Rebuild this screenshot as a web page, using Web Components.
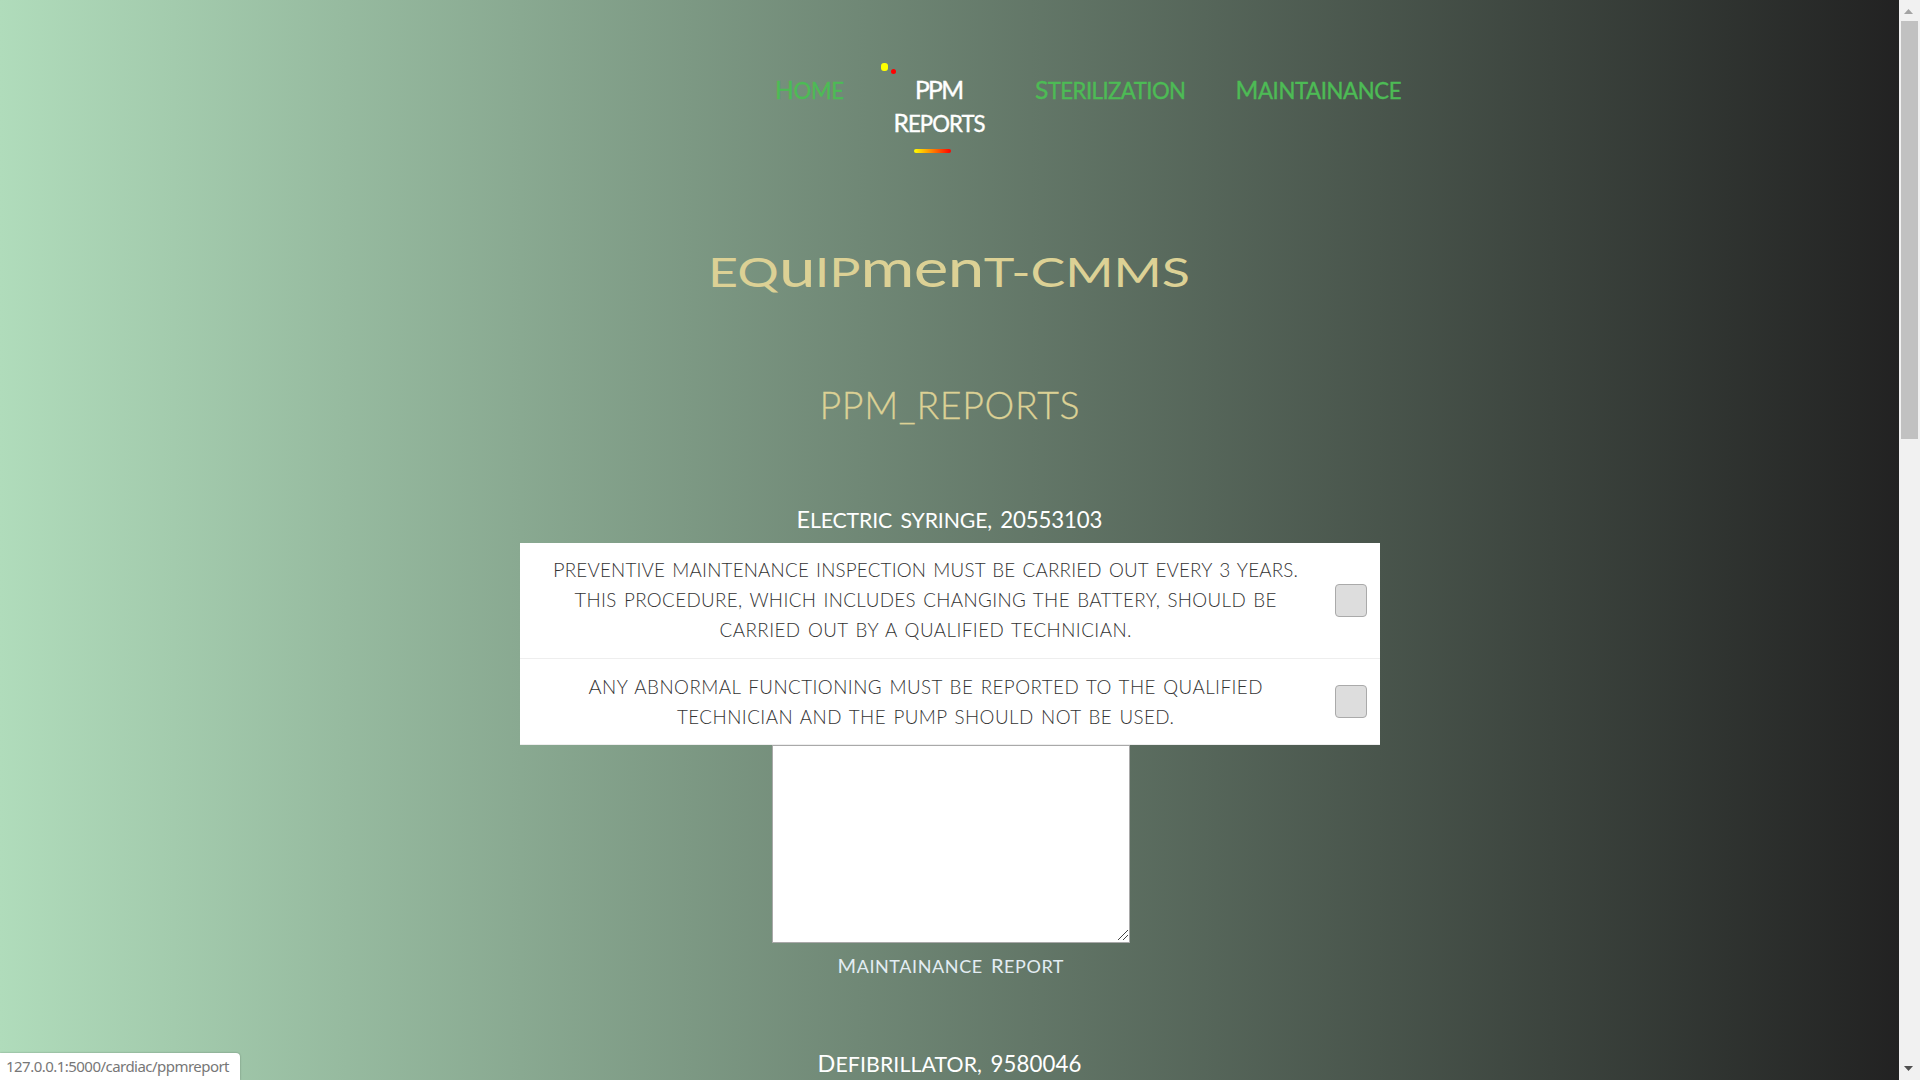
<!DOCTYPE html>
<html lang="en"><head><meta charset="utf-8"><title>Equipment-CMMS</title>
<style>
html,body{margin:0;height:1080px;overflow:hidden}
body{font-family:Lato,"Liberation Sans",sans-serif;background:#222}
</style></head><body>
<cmms-page></cmms-page>
<script>
const define=(name,html,setup)=>customElements.define(name,class extends HTMLElement{
  connectedCallback(){
    if(this.shadowRoot)return;
    this.attachShadow({mode:'open'}).innerHTML=html;
    if(setup)setup(this,this.shadowRoot);
  }
});

/* One line of display lettering: capitals and digits at full size, other letters
   as slightly lower capitals, tracked to the requested measure. */
define('caps-line',`<style>
:host{display:block;text-align:center;white-space:pre;font-kerning:normal;word-spacing:var(--gap,3px)}
#t{display:inline-block}
i{font-style:normal;font-size:var(--small,.9em);line-height:0;text-transform:uppercase}
b{font-weight:inherit;font-size:.95em;line-height:0}
</style><span id="t"></span>`,(host,root)=>{
  const t=root.getElementById('t'),text=host.getAttribute('text'),w=+host.getAttribute('w');
  for(const part of text.match(/[A-Z_]+|[0-9]+|[^A-Z0-9_]+/g)){
    if(/[A-Z_]/.test(part[0]))t.append(part);
    else{const i=document.createElement(/[0-9]/.test(part[0])?'b':'i');i.textContent=part;t.append(i)}
  }
  const ls=(w-t.getBoundingClientRect().width+2)/(text.length-1);
  t.style.letterSpacing=ls+'px';t.style.marginRight=-ls+'px';
});

/* Wide unicase heading: the lowercase forms rise to about the cap height. */
define('wide-title',`<style>
:host{display:block;text-align:center;height:48px;line-height:48px;font-size:41px;color:#dcd195;white-space:nowrap}
#t{display:inline-block;transform-origin:50% 50%}
i{font-style:normal;text-transform:uppercase}
b{font-weight:400;line-height:0;font-size:1.26em;letter-spacing:-.5px}
</style><span id="t">E<i>q</i><b>u</b><i>ip</i><b>men</b><i>t</i>-CMMS</span>`,(host,root)=>{
  const t=root.getElementById('t');
  t.style.transform='scaleX('+482/t.getBoundingClientRect().width+')';
});

define('nav-item',`<style>
:host{display:block;position:relative;font-size:24.6px;line-height:33px;color:#4dbb55;-webkit-text-stroke:.4px currentColor}
:host([active]){color:#fff}
.d{display:none;position:absolute}
:host([active]) .d{display:block}
.y{left:-13px;top:-10px;width:7px;height:8px;border-radius:3px;background:#ff0}
.r{left:-3px;top:-4px;width:5px;height:5px;border-radius:50%;background:red}
.u{left:20px;top:76px;width:37px;height:4px;border-radius:2px;background:linear-gradient(90deg,#ff0,red)}
</style><slot></slot><span class="d y"></span><span class="d r"></span><span class="d u"></span>`);

define('site-nav',`<style>
:host{display:flex;align-items:flex-start;gap:49.5px;padding:73px 0 0 775px;height:66px}
</style>
<nav-item><caps-line text="Home" w="67"></caps-line></nav-item>
<nav-item active><caps-line text="PPM" w="47"></caps-line><caps-line text="Reports" w="90"></caps-line></nav-item>
<nav-item><caps-line text="Sterilization" w="149"></caps-line></nav-item>
<nav-item><caps-line text="Maintainance" w="164"></caps-line></nav-item>`);

define('check-row',`<style>
:host{display:flex;align-items:center;box-sizing:border-box;height:var(--h);padding-right:13px;background:#fff;border-bottom:1px solid #eee;color:#333}
.t{flex:1;font-size:20px;line-height:30px;font-weight:300;--small:.94em;--gap:1.8px;padding-bottom:var(--lift,1px)}
.c{box-sizing:border-box;width:32px;height:33px;margin:0 0 0 4px;border:1px solid #aaa;border-radius:4px;background:#ddd}
</style><div class="t"><slot></slot></div><div class="c"></div>`);

define('report-box',`<style>
:host{display:block;width:358px;height:198px;margin:0 auto;position:relative;left:1.5px}
textarea{display:block;box-sizing:border-box;width:358px;height:198px;margin:0;border:1px solid #a9a9a9;border-radius:0;background:#fff;resize:none;outline:0}
svg{position:absolute;right:2px;bottom:2px}
</style><textarea></textarea><svg width="11" height="11" shape-rendering="crispEdges" stroke="#444" fill="none"><path d="M.5 10.5 10.5 .5M5.5 10.5 10.5 5.5"/></svg>`);

define('page-scrollbar',`<style>
:host{display:flex;flex-direction:column;align-items:center;width:21px;height:1080px;background:#f1f1f1}
.th{width:17px;height:418px;background:#c1c1c1}
svg{display:block;flex:none}.s{flex:1}
</style><svg width="21" height="21"><path d="M5 14 9.5 9 14 14Z" fill="#a3a3a3"/></svg><div class="th"></div><div class="s"></div><svg width="21" height="21"><path d="M5 7 9.5 12 14 7Z" fill="#505050"/></svg>`);

define('status-bubble',`<style>
:host{display:block;position:absolute;left:0;bottom:0;box-sizing:border-box;width:240px;height:27px;padding-left:6px;background:#fff;border-radius:0 4px 0 0;box-shadow:0 0 2px #0005;font:15px/27px "Noto Sans","Open Sans",sans-serif;color:#777;white-space:nowrap}
span{display:inline-block}
</style><span>127.0.0.1:5000/cardiac/ppmreport</span>`,(host,root)=>{
  const s=root.querySelector('span');
  s.style.letterSpacing=(223-s.getBoundingClientRect().width)/32+'px';
});

define('cmms-page',`<style>
:host{display:flex;width:1920px;height:1080px;overflow:hidden;position:relative}
main{width:1899px;height:1080px;overflow:hidden;background:linear-gradient(90deg,#b0dcbb,#222)}
wide-title{margin-top:109px}
.h{margin-top:86px;font-size:37.5px;line-height:46px;height:46px;font-weight:300;color:#dcd195;-webkit-text-stroke:.3px #dcd195}
.e{font-size:23.4px;line-height:30px;height:30px;color:#fff;--small:.91em}
.card{width:860px;margin:9px auto 0;position:relative;left:.5px}
.m{margin-top:9px;padding-left:2px;font-size:20px;line-height:26px;height:26px;color:#e3edf3}
</style>
<main>
<site-nav></site-nav>
<wide-title></wide-title>
<caps-line class="h" text="PPM_REPORTS" w="258"></caps-line>
<caps-line class="e" style="margin-top:76px" text="Electric syringe, 20553103" w="304"></caps-line>
<div class="card">
<check-row style="--h:116px;--lift:4px"><caps-line text="Preventive maintenance inspection must be carried out every 3 years." w="743"></caps-line><caps-line text="This procedure, which includes changing the battery, should be" w="700"></caps-line><caps-line text="carried out by a qualified technician." w="410"></caps-line></check-row>
<check-row style="--h:86px;--lift:2px"><caps-line text="Any abnormal functioning must be reported to the qualified" w="672"></caps-line><caps-line text="technician and the pump should not be used." w="495"></caps-line></check-row>
</div>
<report-box></report-box>
<caps-line class="m" text="Maintainance Report" w="224"></caps-line>
<caps-line class="e" style="margin-top:70px" text="Defibrillator, 9580046" w="262"></caps-line>
</main>
<page-scrollbar></page-scrollbar>
<status-bubble></status-bubble>`);
</script></body></html>
